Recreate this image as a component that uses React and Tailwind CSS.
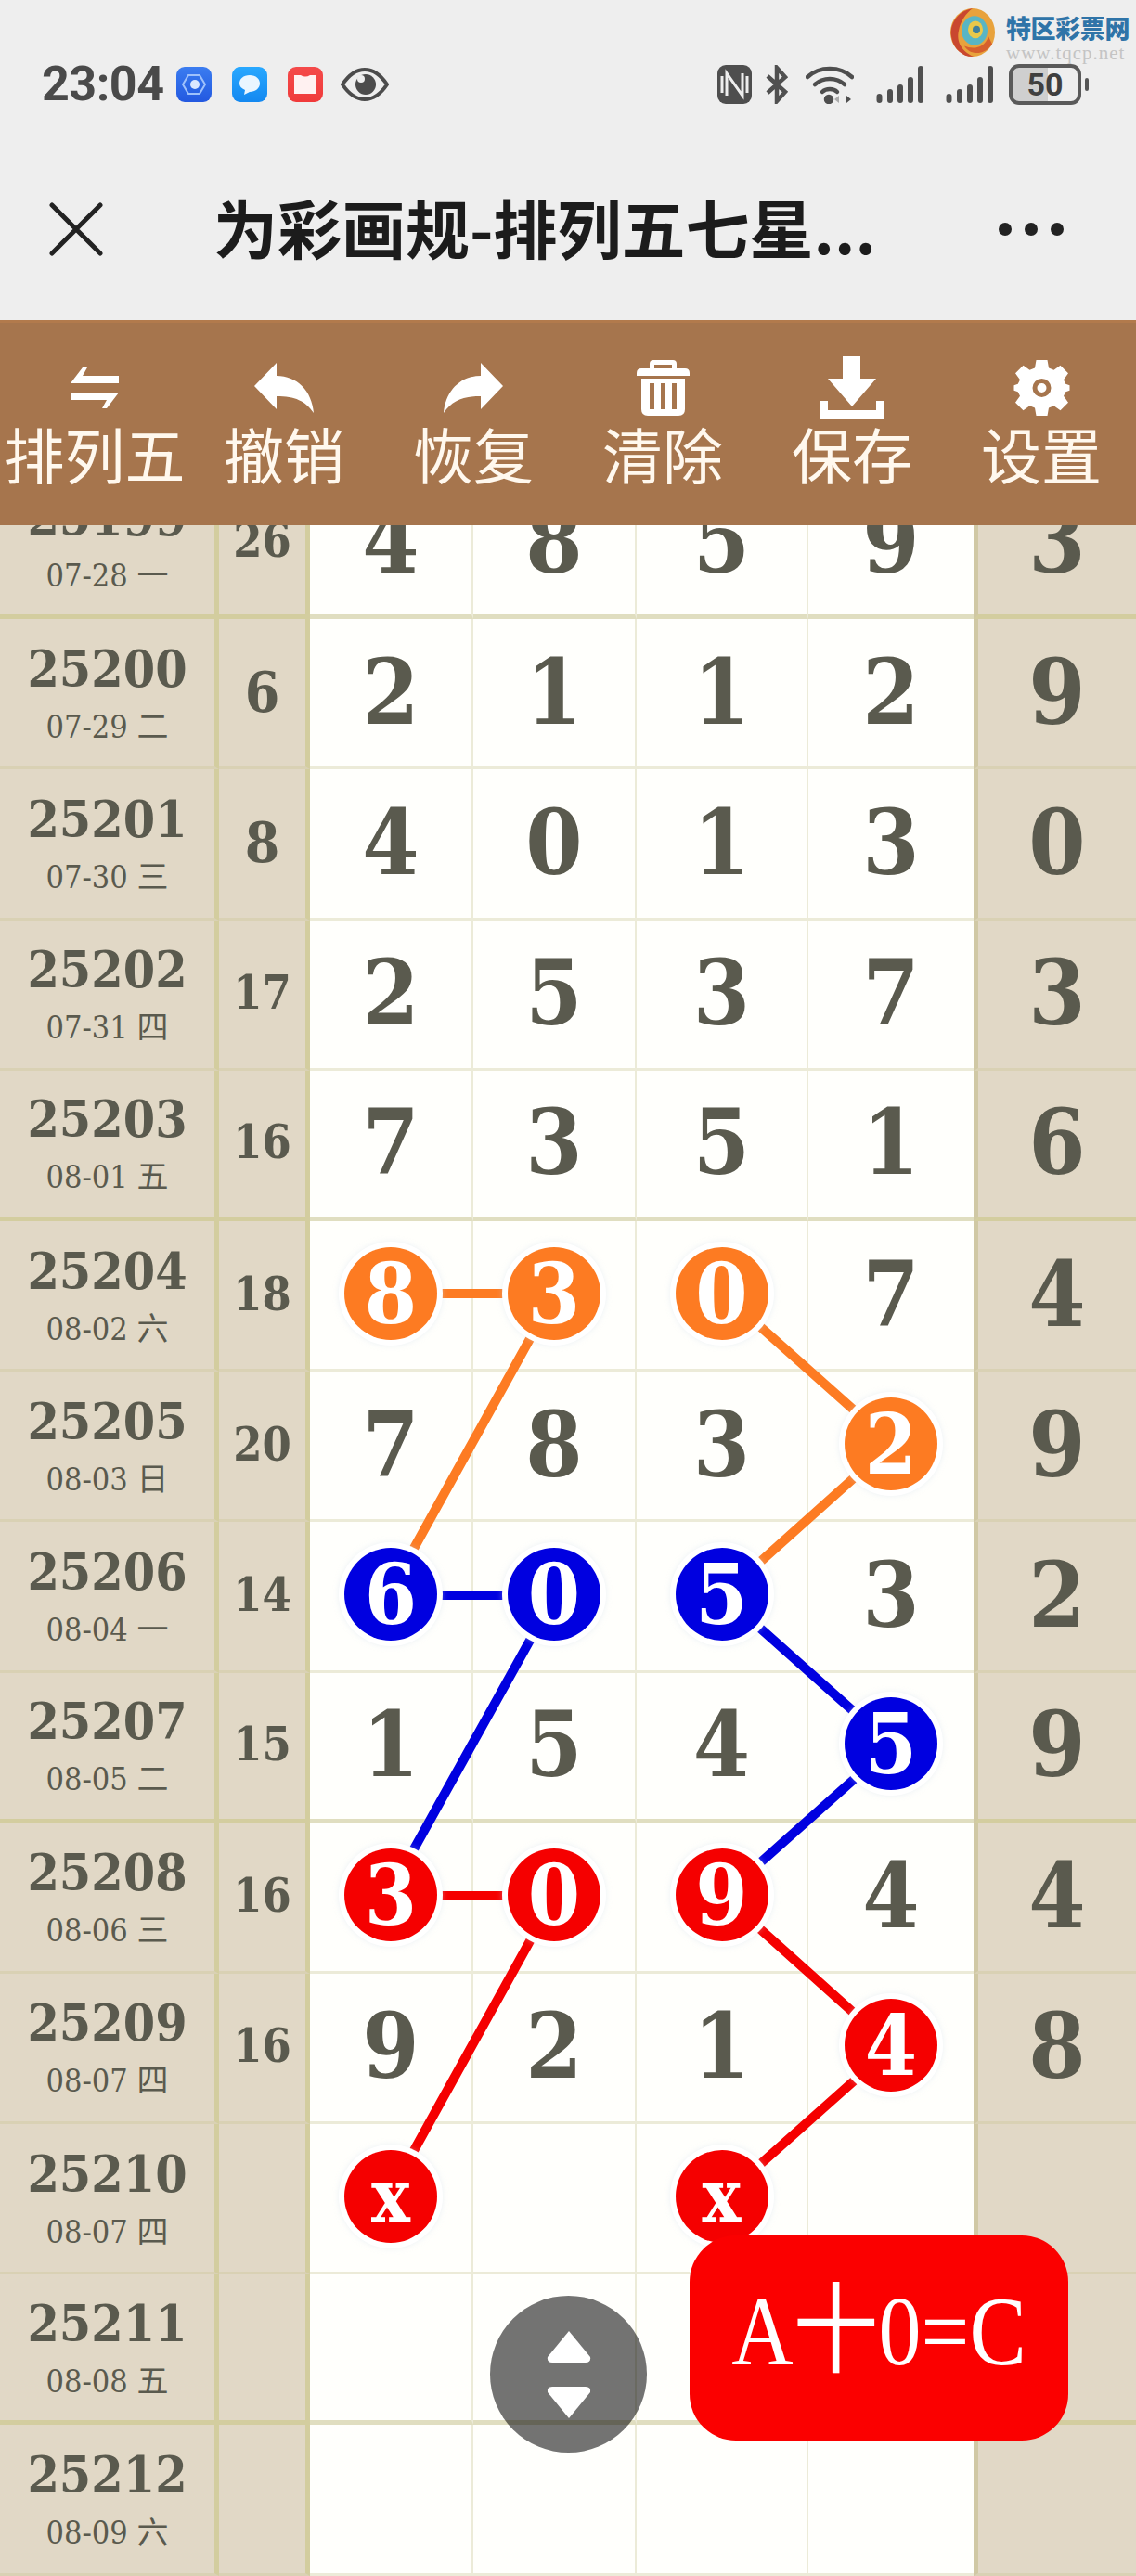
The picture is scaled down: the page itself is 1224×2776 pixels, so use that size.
import React from 'react';

// 期号, 日期, 和值, 五个号码; mark 标出开奖圈的颜色
const ROWS = [
  { id: '25199', date: '07-28 一', sum: '26', nums: ['4', '8', '5', '9', '3'] },
  { id: '25200', date: '07-29 二', sum: '6', nums: ['2', '1', '1', '2', '9'] },
  { id: '25201', date: '07-30 三', sum: '8', nums: ['4', '0', '1', '3', '0'] },
  { id: '25202', date: '07-31 四', sum: '17', nums: ['2', '5', '3', '7', '3'] },
  { id: '25203', date: '08-01 五', sum: '16', nums: ['7', '3', '5', '1', '6'] },
  { id: '25204', date: '08-02 六', sum: '18', nums: ['8', '3', '0', '7', '4'], mark: { color: 'orange', at: [0, 1, 2] } },
  { id: '25205', date: '08-03 日', sum: '20', nums: ['7', '8', '3', '2', '9'], mark: { color: 'orange', at: [3] } },
  { id: '25206', date: '08-04 一', sum: '14', nums: ['6', '0', '5', '3', '2'], mark: { color: 'blue', at: [0, 1, 2] } },
  { id: '25207', date: '08-05 二', sum: '15', nums: ['1', '5', '4', '5', '9'], mark: { color: 'blue', at: [3] } },
  { id: '25208', date: '08-06 三', sum: '16', nums: ['3', '0', '9', '4', '4'], mark: { color: 'red', at: [0, 1, 2] } },
  { id: '25209', date: '08-07 四', sum: '16', nums: ['9', '2', '1', '4', '8'], mark: { color: 'red', at: [3] } },
  { id: '25210', date: '08-07 四', sum: '', nums: ['x', '', 'x', '', ''], mark: { color: 'red', at: [0, 2] } },
  { id: '25211', date: '08-08 五', sum: '', nums: ['', '', '', '', ''] },
  { id: '25212', date: '08-09 六', sum: '', nums: ['', '', '', '', ''] },
];

const LINES = [
  { color: '#fd7b22', points: [[418, 1391], [598, 1391], [418, 1716]] },
  { color: '#fd7b22', points: [[779, 1391], [961, 1553], [779, 1716]] },
  { color: '#0000e0', points: [[418, 1716], [598, 1716], [418, 2040]] },
  { color: '#0000e0', points: [[779, 1716], [961, 1878], [779, 2040]] },
  { color: '#f50000', points: [[418, 2040], [598, 2040], [418, 2365]] },
  { color: '#f50000', points: [[779, 2040], [961, 2203], [779, 2365]] },
];

const CIRCLE_BG = {
  orange: 'bg-[#fd7b22]',
  blue: 'bg-[#0000e0]',
  red: 'bg-[#f50000]',
};

const SERIF = "font-['DejaVu_Serif',serif] [font-stretch:condensed]";

function SwapIcon() {
  return (
    <svg width="56" height="44" viewBox="0 0 56 44" fill="white">
      <path d="M15 0 L20 0 L15 9 H54 V17 H2 Z" />
      <path d="M2 27 H54 L41 44 H36 L41 35 H2 Z" />
    </svg>
  );
}

function UndoIcon() {
  return (
    <svg width="64" height="54" viewBox="0 0 64 54" fill="white">
      <path d="M0 25 L24 0 V14 C46 14 62 30 64 54 C55 41 44 36 24 36 V50 Z" />
    </svg>
  );
}

function RedoIcon() {
  return (
    <svg width="64" height="54" viewBox="0 0 64 54" fill="white">
      <path d="M64 25 L40 0 V14 C18 14 2 30 0 54 C9 41 20 36 40 36 V50 Z" />
    </svg>
  );
}

function TrashIcon() {
  return (
    <svg width="57" height="60" viewBox="0 0 57 60" fill="white">
      <path d="M14 9 V4 Q14 0 18 0 H39 Q43 0 43 4 V9 H52 Q57 9 57 14 V17 H0 V14 Q0 9 5 9 Z M19 9 H38 V5 H19 Z" fillRule="evenodd" />
      <path d="M5 20 H52 V53 Q52 60 45 60 H12 Q5 60 5 53 Z M14 25 V53 H19 V25 Z M26 25 V53 H31 V25 Z M38 25 V53 H43 V25 Z" fillRule="evenodd" />
    </svg>
  );
}

function SaveIcon() {
  return (
    <svg width="68" height="68" viewBox="0 0 68 68" fill="white">
      <path d="M24 0 H43 V24 H60 L34 54 L8 24 H24 Z" />
      <path d="M0 48 H8 V58 H60 V48 H68 V68 H0 Z" />
    </svg>
  );
}

function GearIcon() {
  return (
    <svg width="61" height="60" viewBox="0 0 24 24" fill="white">
      <path
        fillRule="evenodd"
        d="M9.6 0 H14.4 L15 3.4 L17.2 4.3 L20 2.3 L23.4 5.7 L21.4 8.5 L22.3 10.3 L24 10.9 V13.1 L22.3 13.7 L21.4 15.5 L23.4 18.3 L20 21.7 L17.2 19.7 L15 20.6 L14.4 24 H9.6 L9 20.6 L6.8 19.7 L4 21.7 L.6 18.3 L2.6 15.5 L1.7 13.7 L0 13.1 V10.9 L1.7 10.3 L2.6 8.5 L.6 5.7 L4 2.3 L6.8 4.3 L9 3.4 Z M12 8 A4 4 0 1 0 12 16 A4 4 0 1 0 12 8 Z M12 10 A2 2 0 1 1 12 14 A2 2 0 1 1 12 10 Z"
      />
    </svg>
  );
}

function CloseIcon() {
  return (
    <svg width="58" height="58" viewBox="0 0 58 58" stroke="#222" strokeWidth="5" strokeLinecap="round">
      <path d="M3 3 L55 55 M55 3 L3 55" />
    </svg>
  );
}

function AppBadge({ from, to, children }) {
  return (
    <div className={`w-[38px] h-[38px] rounded-[9px] flex items-center justify-center bg-linear-to-b ${from} ${to}`}>
      {children}
    </div>
  );
}

function Signal() {
  return (
    <svg width="52" height="40" viewBox="0 0 52 40" stroke="#505050" strokeWidth="6" strokeLinecap="round">
      <path d="M3.5 37 V33 M15 37 V28 M26 37 V23 M37 37 V15 M48 37 V3" />
    </svg>
  );
}

function StatusBar() {
  return (
    <div className="h-[38px] mt-[72px] pl-[45px] pr-[51px] flex items-center justify-between">
      <div className="flex items-center">
        <span className="font-['Roboto',sans-serif] font-bold text-[52px] leading-none text-[#4a4a4a] w-[145px] tracking-[-0.5px]">23:04</span>
        <div className="flex items-center gap-[22px]">
          <AppBadge from="from-[#3b7cf0]" to="to-[#2358e0]">
            <svg width="26" height="26" viewBox="0 0 26 26">
              <path d="M7 3 H19 L25 13 L19 23 H7 L1 13 Z" fill="none" stroke="#9ec1fb" strokeWidth="2" />
              <circle cx="14" cy="13" r="5" fill="#dbe8ff" />
            </svg>
          </AppBadge>
          <AppBadge from="from-[#28a8ff]" to="to-[#1488f0]">
            <svg width="26" height="24" viewBox="0 0 26 24">
              <path d="M13 2 C20 2 24 6 24 11 C24 16 19 20 13 20 L7 23 L8 18 C4 16 2 14 2 11 C2 6 6 2 13 2 Z" fill="#eaf6ff" />
            </svg>
          </AppBadge>
          <AppBadge from="from-[#f44a4a]" to="to-[#f03a3a]">
            <svg width="28" height="24" viewBox="0 0 28 24">
              <path d="M2 2 H9 Q14 5 19 2 H26 V22 H2 Z" fill="#fff1f1" />
            </svg>
          </AppBadge>
          <svg width="52" height="38" viewBox="0 0 52 38" className="-ml-[3px]">
            <path d="M2 19 C10 7 18 3 26 3 C34 3 42 7 50 19 C42 31 34 35 26 35 C18 35 10 31 2 19 Z" fill="none" stroke="#4c4c4c" strokeWidth="4" />
            <circle cx="27" cy="19" r="11" fill="#4c4c4c" />
            <circle cx="22" cy="13" r="4" fill="#eee" />
          </svg>
        </div>
      </div>
      <div className="flex items-center">
        <svg width="37" height="42" viewBox="0 0 37 42">
          <rect width="37" height="42" rx="9" fill="#4e4e4e" />
          <path d="M10 33 V9 L27 33 V9 M5 12 V30 M32 12 V30" fill="none" stroke="#eee" strokeWidth="3" />
        </svg>
        <svg width="25" height="42" viewBox="0 0 25 42" className="ml-[15px]" fill="none" stroke="#505050" strokeWidth="4.5">
          <path d="M2 12 L21 29 L12 39 V3 L21 13 L2 30" />
        </svg>
        <svg width="52" height="42" viewBox="0 0 52 42" className="ml-[18px]" fill="none" stroke="#4e4e4e" strokeWidth="4.5" strokeLinecap="round">
          <path d="M2 13 C15 1 37 1 50 13" />
          <path d="M10 21 C19 13 33 13 42 21" />
          <path d="M18 29 C22 25 30 25 34 29" />
          <circle cx="25" cy="37" r="3" fill="#4e4e4e" />
          <path d="M36 33 L31 37 L36 41 Z" fill="#aaa" stroke="none" />
          <path d="M44 33 L49 37 L44 41 Z" fill="#4e4e4e" stroke="none" />
        </svg>
        <div className="ml-[24px]"><Signal /></div>
        <div className="ml-[23px]"><Signal /></div>
        <div className="ml-[16px] w-[78px] h-[44px] rounded-[11px] border-[4px] border-[#5a5a5a] bg-linear-to-r from-[#cfcfcf] from-55% to-[#eee] to-55% flex items-center justify-center">
          <span className="font-['Roboto',sans-serif] font-bold text-[34px] leading-none text-[#3f3f3f]">50</span>
        </div>
        <div className="ml-[4px] w-[4px] h-[14px] rounded-full bg-[#555]" />
      </div>
    </div>
  );
}

function Watermark() {
  return (
    <div className="absolute top-[8px] left-[1023px] flex">
      <svg width="50" height="54" viewBox="0 0 50 52" preserveAspectRatio="none">
        <ellipse cx="25" cy="26" rx="24" ry="25" fill="#e8a23c" />
        <path d="M25 1 C8 4 0 18 2 30 C4 44 16 52 26 51 C14 46 7 36 10 24 C12 14 18 6 25 1 Z" fill="#c9472f" />
        <path d="M46 38 C38 50 22 50 16 40 C26 44 38 42 42 30 Z" fill="#d6602e" />
        <ellipse cx="27" cy="24" rx="14" ry="15" fill="#59b5c4" />
        <ellipse cx="28" cy="23" rx="8" ry="9" fill="#e9c84a" />
        <circle cx="29" cy="23" r="4" fill="#3f7f9c" />
      </svg>
      <div className="ml-[11px] mt-[7px] flex flex-col">
        <span className="font-['Noto_Sans_CJK_SC',sans-serif] font-black text-[27px] leading-[30px] -tracking-[0.4px] text-[#2f74a8]">特区彩票网</span>
        <span className="mt-[2px] font-['Liberation_Serif',serif] text-[21px] leading-[20px] text-[#c4c4c4] tracking-[1px]">www.tqcp.net</span>
      </div>
    </div>
  );
}

function NavBar() {
  return (
    <div className="flex items-center h-[60px] mt-[107px] pl-[53px]">
      <CloseIcon />
      <h1 className="ml-[119px] mb-[6px] w-[732px] font-['Noto_Sans_CJK_SC',sans-serif] font-bold text-[69px] leading-none text-[#1c1c1c] whitespace-nowrap">
        为彩画规-排列五七星...
      </h1>
      <div className="ml-[114px] flex gap-[14px]">
        <div className="w-[14px] h-[14px] rounded-full bg-[#222]" />
        <div className="w-[14px] h-[14px] rounded-full bg-[#222]" />
        <div className="w-[14px] h-[14px] rounded-full bg-[#222]" />
      </div>
    </div>
  );
}

function ToolItem({ icon, label }) {
  return (
    <div className="flex flex-col items-center">
      <div className="h-[68px] flex items-center justify-center">{icon}</div>
      <span className="mt-[1px] text-[65px] leading-[70px] text-[#fff8ee] whitespace-nowrap">{label}</span>
    </div>
  );
}

function Toolbar() {
  return (
    <div className="relative z-20 h-[221px] pt-[36px] grid grid-cols-6 bg-[#a6754d] font-['Noto_Sans_CJK_SC',sans-serif] border-t-[3px] border-[#b27a4c]">
      <ToolItem icon={<SwapIcon />} label="排列五" />
      <ToolItem icon={<UndoIcon />} label="撤销" />
      <ToolItem icon={<RedoIcon />} label="恢复" />
      <ToolItem icon={<TrashIcon />} label="清除" />
      <ToolItem icon={<SaveIcon />} label="保存" />
      <ToolItem icon={<GearIcon />} label="设置" />
    </div>
  );
}

function Circle({ color, value }) {
  return (
    <div className={`relative z-10 w-[100px] h-[100px] rounded-full flex items-center justify-center text-white ${CIRCLE_BG[color]} ring-[6px] ring-white shadow-[0_0_6px_6px_rgba(200,215,235,0.35)] ${value === 'x' ? 'text-[78px]' : 'text-[90px]'}`}>
      {value}
    </div>
  );
}

function NumberCell({ value, color, className }) {
  return (
    <div className={`flex items-center justify-center ${color ? 'pb-[4px]' : 'pb-[2px]'} ${SERIF} font-bold text-[98px] leading-none text-[#5a5a4e] ${className}`}>
      {color ? <Circle color={color} value={value} /> : value}
    </div>
  );
}

function Row({ row, index }) {
  const thick = index % 4 === 0;
  const line = thick ? 'border-b-[5px] border-b-[#e0dec0]' : 'border-b-[3px] border-b-[#ecebd8]';
  const sideLine = thick ? 'border-b-[5px] border-b-[#d3cd9f]' : 'border-b-[3px] border-b-[#d9d1b4]';
  return (
    <div className="grid grid-cols-[236px_98px_176px_176px_185px_178px_1fr] h-[162.2px]">
      <div className={`flex flex-col items-center justify-center bg-[#e1d8c6] border-r-[5px] border-r-[#d3cd9f] ${sideLine} ${SERIF} text-[#5a5a4e]`}>
        <span className="font-bold text-[55px] leading-[60px]">{row.id}</span>
        <span className="mt-[12px] font-normal text-[34px] leading-[40px] whitespace-nowrap font-['DejaVu_Serif','Noto_Sans_CJK_SC',serif]">{row.date}</span>
      </div>
      <div className={`flex items-center justify-center pb-[2px] bg-[#e1d8c6] border-r-[5px] border-r-[#d3cd9f] ${sideLine} ${SERIF} font-bold leading-none text-[#5a5a4e] ${row.sum.length > 1 ? 'text-[50px]' : 'text-[60px]'}`}>
        {row.sum}
      </div>
      {row.nums.slice(0, 4).map((n, i) => {
        const color = row.mark && row.mark.at.includes(i) ? row.mark.color : null;
        return (
          <NumberCell
            key={i}
            value={n}
            color={color}
            className={`bg-[#fffffc] ${line} ${i < 3 ? 'border-r-[2px] border-r-[#ecebd8]' : ''}`}
          />
        );
      })}
      <NumberCell value={row.nums[4]} className={`bg-[#e1d8c6] border-l-[5px] border-l-[#d0c8a4] ${sideLine}`} />
    </div>
  );
}

function Table() {
  return (
    <div className="relative h-[2210px] overflow-hidden">
      <div className="-mt-[61px]">
        {ROWS.map((row, i) => (
          <Row key={row.id} row={row} index={i} />
        ))}
      </div>
      {/* 连线,坐标按整页算 */}
      <svg className="absolute top-0 left-0 w-[1224px] h-[2210px]" viewBox="0 563 1224 2210" fill="none" strokeWidth="10">
        {LINES.map((l, i) => (
          <polyline key={i} points={l.points.map((p) => p.join(',')).join(' ')} stroke={l.color} />
        ))}
      </svg>
    </div>
  );
}

function ScrollButton() {
  return (
    <div className="absolute z-30 left-[528px] top-[2474px] w-[169px] h-[169px] rounded-full bg-black/55 flex flex-col items-center justify-center gap-[26px]">
      <svg width="48" height="34" viewBox="0 0 48 34" fill="white">
        <path d="M24 0 L47 28 Q48 34 42 34 H6 Q0 34 1 28 Z" />
      </svg>
      <svg width="48" height="34" viewBox="0 0 48 34" fill="white">
        <path d="M24 34 L47 6 Q48 0 42 0 H6 Q0 0 1 6 Z" />
      </svg>
    </div>
  );
}

function FormulaButton() {
  return (
    <div className="absolute z-30 left-[743px] top-[2409px] w-[408px] h-[221px] rounded-[50px] bg-[#fb0000] pb-[16px] flex items-center justify-center">
      <span className="scale-y-115 font-['Liberation_Serif','Noto_Sans_CJK_SC',serif] text-[92px] leading-none text-white whitespace-nowrap">A十0=C</span>
    </div>
  );
}

export default function App() {
  return (
    <div className="relative w-[1224px] h-[2776px] overflow-hidden bg-white">
      <div className="h-[345px] bg-[#eeeeee] overflow-hidden">
        <StatusBar />
        <NavBar />
      </div>
      <Watermark />
      <Toolbar />
      <Table />
      <ScrollButton />
      <FormulaButton />
    </div>
  );
}
